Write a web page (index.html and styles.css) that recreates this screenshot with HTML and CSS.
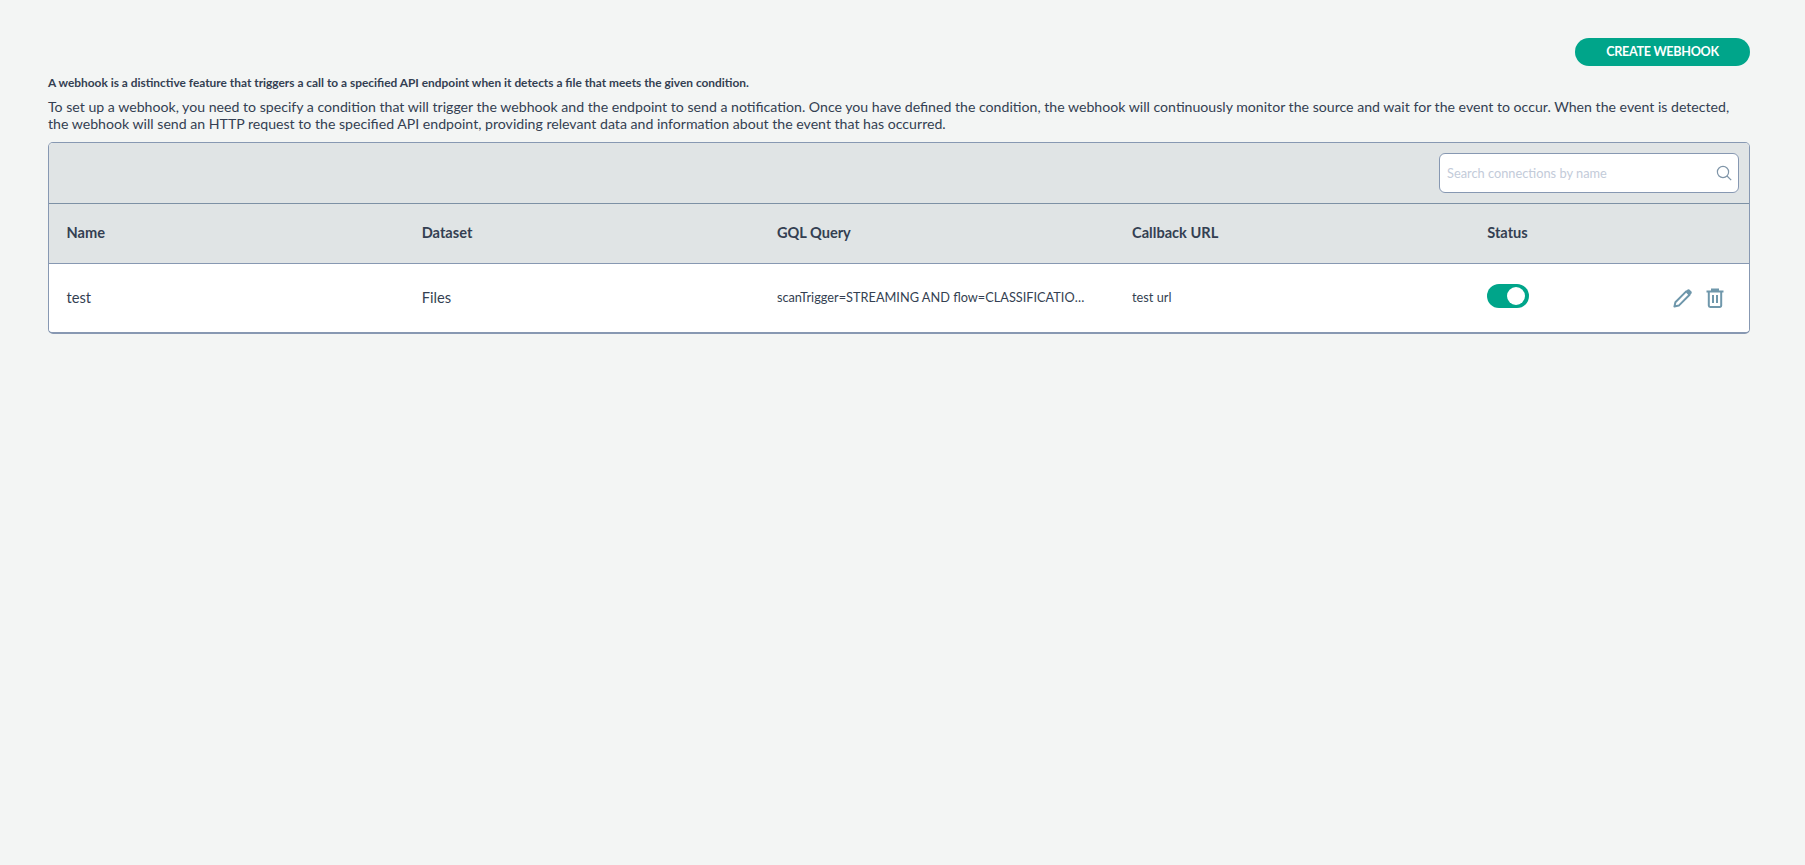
FILE: index.html
```html
<!DOCTYPE html>
<html lang="en">
<head>
<meta charset="utf-8">
<title>Webhooks</title>
<link rel="stylesheet" href="styles.css">
</head>
<body>
<main class="page">
  <div class="actions-bar">
    <button class="create-btn" type="button">CREATE WEBHOOK</button>
  </div>
  <p class="intro-bold">A webhook is a distinctive feature that triggers a call to a specified API endpoint when it detects a file that meets the given condition.</p>
  <p class="intro">To set up a webhook, you need to specify a condition that will trigger the webhook and the endpoint to send a notification. Once you have defined the condition, the webhook will continuously monitor the source and wait for the event to occur. When the event is detected, the webhook will send an HTTP request to the specified API endpoint, providing relevant data and information about the event that has occurred.</p>
  <section class="table">
    <div class="toolbar">
      <div class="search">
        <span class="search-placeholder">Search connections by name</span>
        <svg class="search-icon" width="16" height="16" viewBox="0 0 16 16" fill="none" stroke="#7f95a8" stroke-width="1.2"><circle cx="7" cy="7" r="5.6"/><path d="M11 11l4.2 4.2"/></svg>
      </div>
    </div>
    <div class="row head">
      <div class="cell">Name</div>
      <div class="cell">Dataset</div>
      <div class="cell">GQL Query</div>
      <div class="cell">Callback URL</div>
      <div class="cell">Status</div>
    </div>
    <div class="row body">
      <div class="cell name">test</div>
      <div class="cell name">Files</div>
      <div class="cell small"><span class="truncate">scanTrigger=STREAMING AND flow=CLASSIFICATION AND status=DONE</span></div>
      <div class="cell small">test url</div>
      <div class="cell status">
        <span class="toggle"><span class="knob"></span></span>
        <span class="icons">
          <svg width="20" height="20" viewBox="0 0 20 20" fill="none"><path d="M1.4 18.6l1-4.4L13.2 3.4l3.4 3.4L5.8 17.6z" stroke="#6f97ab" stroke-width="2" stroke-linejoin="round"/><path d="M14.6 1.6a1.3 1.3 0 0 1 1.8 0l2 2a1.3 1.3 0 0 1 0 1.8l-1.6 1.6-3.8-3.8z" fill="#6f97ab"/></svg>
          <svg width="18" height="20" viewBox="0 0 18 20" fill="none" stroke="#6f97ab" stroke-width="2"><path d="M0.5 3.6h17M6 3.4V1.4h6v2M2.8 3.6v14a1.4 1.4 0 0 0 1.4 1.4h9.6a1.4 1.4 0 0 0 1.4-1.4v-14M7 7v8M11 7v8"/></svg>
        </span>
      </div>
    </div>
  </section>
</main>
</body>
</html>
```
FILE: styles.css
```css
* { box-sizing: border-box; }
html, body { margin: 0; height: 100%; }
body {
  background: #f3f5f4;
  color: #343f52;
  font-family: Lato, "Open Sans", sans-serif;
}
.page { padding: 38px 55px 0 48px; }
.actions-bar { display: flex; justify-content: flex-end; }
.create-btn {
  width: 175px;
  height: 28px;
  border: 0;
  border-radius: 14px;
  background: #00a58a;
  color: #fff;
  font: 700 12.6px/28px Lato, sans-serif;
  letter-spacing: -0.3px;
  padding: 0;
}
.intro-bold {
  margin: 9px 0 0;
  font-size: 11.9px;
  line-height: 15px;
  font-weight: 700;
}
.intro {
  margin: 8px 0 0;
  font-size: 14.14px;
  line-height: 17px;
}
.table {
  margin-top: 10px;
  border: 1px solid #8798b2;
  border-bottom-width: 2px;
  border-radius: 5px;
  overflow: hidden;
  background: #fff;
}
.toolbar {
  height: 61px;
  padding: 10px 10px 0 0;
  display: flex;
  justify-content: flex-end;
  align-items: flex-start;
  background: #e0e4e5;
  border-bottom: 1px solid #7d91a5;
}
.search {
  width: 300px;
  height: 40px;
  background: #fff;
  border: 1px solid #8798b2;
  border-radius: 6px;
  display: flex;
  align-items: center;
  justify-content: space-between;
  padding: 0 6px 0 7px;
}
.search-placeholder { font-size: 12.8px; color: #c3cbd9; }
.row {
  display: grid;
  grid-template-columns: repeat(4, 355.2px) 1fr;
  padding-left: 17.5px;
}
.head {
  height: 60px;
  padding-bottom: 2px;
  background: #e0e4e5;
  border-bottom: 1px solid #8798b2;
  font-size: 14.6px;
  font-weight: 700;
  align-items: center;
}
.body { height: 68px; padding-bottom: 2px; align-items: center; background: #fff; }
.cell { min-width: 0; }
.name { font-size: 14.7px; }
.small { font-size: 12.75px; }
.truncate {
  display: block;
  width: 313px;
  white-space: nowrap;
  overflow: hidden;
  text-overflow: ellipsis;
}
.status { display: flex; align-items: center; justify-content: space-between; padding-right: 25px; }
.toggle {
  width: 42px;
  height: 24px;
  border-radius: 12px;
  background: #00a58a;
  display: flex;
  align-items: center;
  justify-content: flex-end;
  padding-right: 4px;
  margin-top: -2px;
}
.knob { width: 18px; height: 18px; border-radius: 50%; background: #fff; }
.icons { display: flex; align-items: center; gap: 13px; margin-top: 2px; }
.icons svg { display: block; }
```
